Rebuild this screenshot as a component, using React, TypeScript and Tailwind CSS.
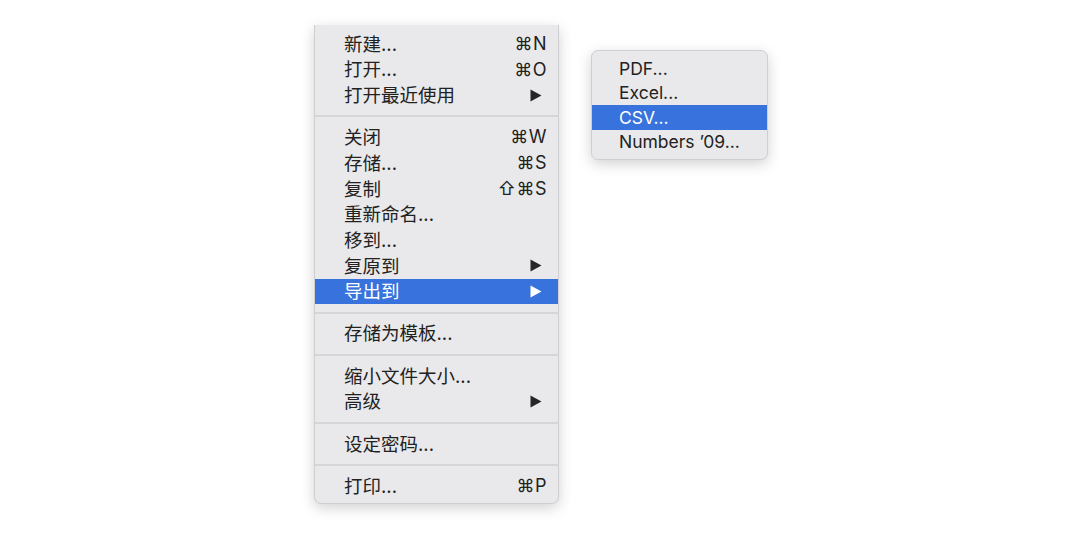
import React from "react";

type Row =
  | { kind: "item"; label: string; shortcut?: string; submenu?: boolean; active?: boolean }
  | { kind: "sep" };

const rows: Row[] = [
  { kind: "item", label: "新建...", shortcut: "⌘N" },
  { kind: "item", label: "打开...", shortcut: "⌘O" },
  { kind: "item", label: "打开最近使用", submenu: true },
  { kind: "sep" },
  { kind: "item", label: "关闭", shortcut: "⌘W" },
  { kind: "item", label: "存储...", shortcut: "⌘S" },
  { kind: "item", label: "复制", shortcut: "⇧⌘S" },
  { kind: "item", label: "重新命名..." },
  { kind: "item", label: "移到..." },
  { kind: "item", label: "复原到", submenu: true },
  { kind: "item", label: "导出到", submenu: true, active: true },
  { kind: "sep" },
  { kind: "item", label: "存储为模板..." },
  { kind: "sep" },
  { kind: "item", label: "缩小文件大小..." },
  { kind: "item", label: "高级", submenu: true },
  { kind: "sep" },
  { kind: "item", label: "设定密码..." },
  { kind: "sep" },
  { kind: "item", label: "打印...", shortcut: "⌘P" },
];

const exportItems = ["PDF...", "Excel...", "CSV...", "Numbers ’09..."];

const font = {
  fontFamily: '"Inter", "Noto Sans CJK SC", "DejaVu Sans", sans-serif',
};

function Arrow({ white }: { white?: boolean }) {
  return (
    <svg width="12" height="13" viewBox="0 0 12 13" className="mr-[5px]">
      <path d="M0.5 0.5 L11.5 6.5 L0.5 12.5 Z" fill={white ? "#ffffff" : "#262626"} />
    </svg>
  );
}

export default function App() {
  return (
    <div className="relative w-[1080px] h-[540px] bg-white overflow-hidden" style={font}>
      {/* 主菜单 */}
      <div className="ml-[314px] mt-[25px] w-[245px] bg-[#e9e9eb] border border-t-0 border-[#cfcfd2] rounded-b-[7px] shadow-[0_4px_14px_rgba(0,0,0,0.18)] pt-[6px] pb-[4px]">
        {rows.map((r, i) =>
          r.kind === "sep" ? (
            <div key={i} className="h-[16.5px] flex items-center">
              <div className="w-full h-[2px] bg-[#d6d6d9]" />
            </div>
          ) : (
            <div
              key={i}
              className={`h-[25.7px] flex items-center justify-between pl-[29px] pr-[11px] text-[18.5px] leading-none ${
                r.active ? "bg-[#3872dc] text-white" : "text-[#222222]"
              }`}
            >
              <span>{r.label}</span>
              {r.shortcut && <span className="text-[18px] tracking-[0.5px]">{r.shortcut}</span>}
              {r.submenu && <Arrow white={r.active} />}
            </div>
          )
        )}
      </div>

      {/* 导出子菜单 */}
      <div className="absolute left-[591px] top-[50px] w-[177px] bg-[#e9e9eb] border border-[#cfcfd2] rounded-[7px] shadow-[0_4px_14px_rgba(0,0,0,0.18)] pt-[5px] pb-[5px]">
        {exportItems.map((label) => (
          <div
            key={label}
            className={`h-[24.5px] flex items-center pl-[27px] text-[17.5px] leading-none ${
              label === "CSV..." ? "bg-[#3872dc] text-white" : "text-[#222222]"
            }`}
          >
            {label}
          </div>
        ))}
      </div>
    </div>
  );
}
